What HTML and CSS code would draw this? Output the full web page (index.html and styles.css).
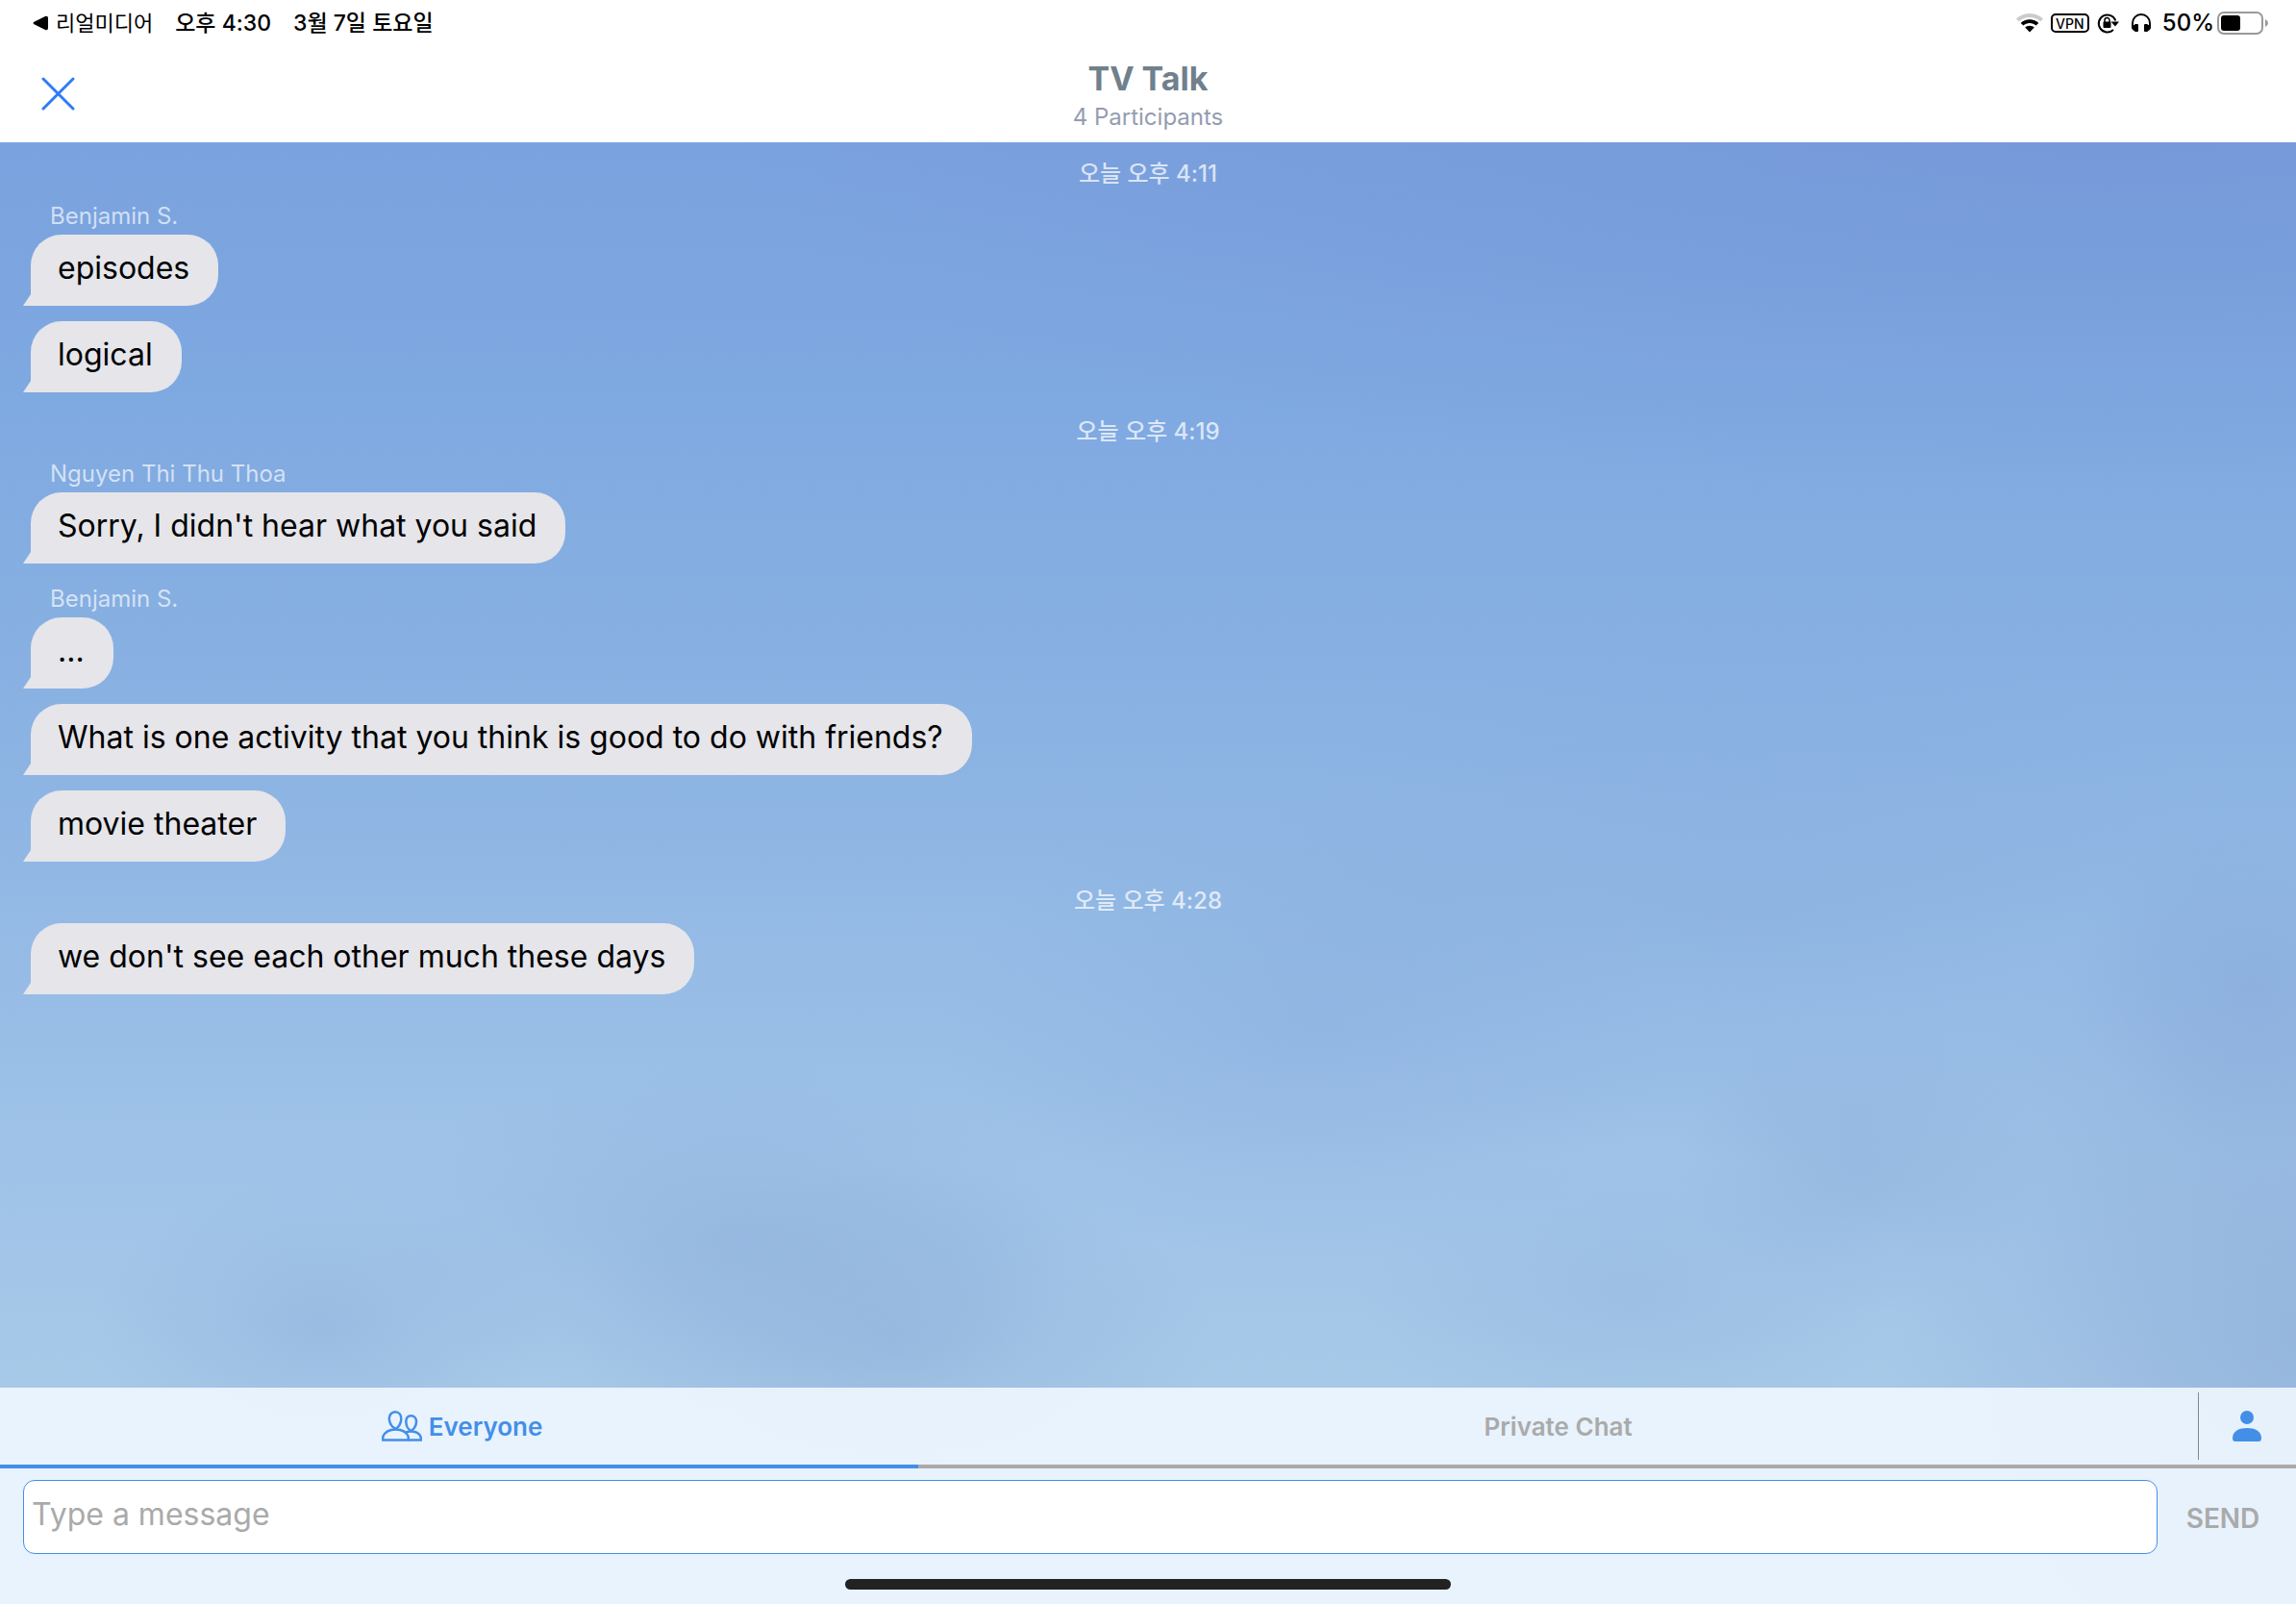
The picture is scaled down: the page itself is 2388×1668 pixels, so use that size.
FILE: index.html
```html
<!DOCTYPE html>
<html lang="ko">
<head>
<meta charset="utf-8">
<meta name="viewport" content="width=device-width, initial-scale=1">
<title>TV Talk</title>
<link rel="stylesheet" href="styles.css">
</head>
<body>
<div class="app">
  <div class="status">
    <a class="status-back" href="#">
      <svg width="16" height="16" viewBox="0 0 16 16" aria-hidden="true"><path d="M1 7 Q0 8 1 9 L13 15 Q16 16 16 13 V3 Q16 0 13 1 Z"/></svg>
      <span>리얼미디어</span>
    </a>
    <span class="status-time">오후 4:30</span>
    <span class="status-date">3월 7일 토요일</span>
    <div class="status-icons">
      <svg width="28" height="20" viewBox="0 0 28 20" aria-hidden="true">
        <path d="M14 0C8.500 0 3.600 2.100 0 5.600L2.700 8.300C5.700 5.500 9.600 3.900 14 3.900S22.300 5.500 25.300 8.300L28 5.600C24.400 2.100 19.500 0 14 0Z" fill="#cbcbcb"/>
        <path d="M14 6.200C10.400 6.200 7.200 7.500 4.700 9.900L7.400 12.600C9.200 11 11.500 10 14 10S18.800 11 20.600 12.600L23.300 9.900C20.800 7.500 17.600 6.200 14 6.200Z"/>
        <path d="M14 12.700C12.100 12.700 10.400 13.400 9.200 14.600L14 19.600L18.800 14.600C17.600 13.400 15.900 12.700 14 12.700Z"/>
      </svg>
      <span class="vpn">VPN</span>
      <svg width="24" height="22" viewBox="0 0 24 22" fill="none" stroke="#000" stroke-width="2" aria-hidden="true">
        <path d="M17 18A9 9 0 1 1 19.300 8.500"/>
        <path d="M14.500 9.500H23L19 14.500Z" fill="#000" stroke="none"/>
        <rect x="6.500" y="9.500" width="8" height="6.500" rx="1" fill="#000" stroke="none"/>
        <path d="M8 10V8a2.500 2.500 0 0 1 5 0v2" stroke-width="1.500"/>
      </svg>
      <svg class="phones" width="20" height="20" viewBox="0 0 20 20" aria-hidden="true">
        <path d="M1 15V10a9 9 0 0 1 18 0V15" fill="none" stroke="#000" stroke-width="2"/>
        <rect x="3" y="11" width="4" height="8" rx="1"/><rect x="13" y="11" width="4" height="8" rx="1"/>
        <path d="M0 12h3v6q-3-1-3-4zM20 12h-3v6q3-1 3-4z"/>
      </svg>
      <span class="percent">50%</span>
      <svg width="54" height="24" viewBox="0 0 54 24" aria-hidden="true">
        <rect x="1" y="1" width="46" height="22" rx="6" fill="none" stroke="#999" stroke-width="2"/>
        <rect x="4" y="4" width="20" height="16" rx="3"/>
        <path d="M50 8q3 1.500 3 4t-3 4z" fill="#999"/>
      </svg>
    </div>
  </div>

  <header class="header">
    <button class="close" type="button" aria-label="Close">
      <svg width="36" height="36" viewBox="0 0 36 36" aria-hidden="true"><path d="M3 2L34 33M34 2L3 33" stroke="#2f7bf6" stroke-width="3" stroke-linecap="round"/></svg>
    </button>
    <div class="heading">
      <h1 class="title">TV Talk</h1>
      <p class="subtitle">4 Participants</p>
    </div>
  </header>

  <div class="room">
    <main class="messages">
      <time class="stamp">오늘 오후 4:11</time>
      <div class="sender">Benjamin S.</div>
      <p class="bubble">episodes</p>
      <p class="bubble">logical</p>
      <time class="stamp">오늘 오후 4:19</time>
      <div class="sender">Nguyen Thi Thu Thoa</div>
      <p class="bubble">Sorry, I didn't hear what you said</p>
      <div class="sender">Benjamin S.</div>
      <p class="bubble">...</p>
      <p class="bubble">What is one activity that you think is good to do with friends?</p>
      <p class="bubble">movie theater</p>
      <time class="stamp">오늘 오후 4:28</time>
      <p class="bubble">we don't see each other much these days</p>
    </main>

    <footer class="footer">
      <div class="tabs">
        <button class="tab tab-active" type="button">
          <svg width="42" height="32" viewBox="0 0 42 32" fill="none" stroke="#438fe8" stroke-width="2.500" aria-hidden="true">
            <path d="M14 1.300C18 1.300 20.300 4.500 20.300 8.500C20.300 13 17.500 17.500 14.500 18.800C11 17.500 7.800 13 7.800 8.500C7.800 4.500 10 1.300 14 1.300Z"/>
            <path d="M1.300 30.500V27C3.500 21.500 9 19.500 14.500 19.500S25.500 21.500 27.700 27V30.500Z"/>
            <path d="M30.500 5.200C34 5.200 36 7.800 36 11.500C36 15.500 33.500 19.500 30.500 20.800C27.500 19.500 25.300 15.500 25.300 11.500C25.300 7.800 27.200 5.200 30.500 5.200Z"/>
            <path d="M25 22.500C31 20 39 22 40.700 27.500V30.500H28"/>
          </svg>
          <span>Everyone</span>
        </button>
        <button class="tab tab-private" type="button">Private Chat</button>
        <button class="people" type="button" aria-label="Participants">
          <svg width="30" height="32" viewBox="0 0 30 32" fill="#438fe8" aria-hidden="true"><circle cx="15" cy="7" r="7"/><path d="M0 28.500C0 21 7 18 15 18S30 21 30 28.500Q30 32 27 32H3Q0 32 0 28.500Z"/></svg>
        </button>
      </div>
      <form class="composer">
        <input class="entry" type="text" placeholder="Type a message" aria-label="Type a message">
        <button class="send" type="button">SEND</button>
      </form>
      <div class="home"></div>
    </footer>
  </div>
</div>
</body>
</html>
```
FILE: styles.css
```css
* { box-sizing: border-box; }

body {
  margin: 0;
  font-family: Inter, "Noto Sans CJK KR", sans-serif;
  color: #000;
  background: #fff;
}

h1, p { margin: 0; }

button {
  padding: 0;
  border: 0;
  background: none;
  font-family: inherit;
}

svg { display: block; flex: none; }

.app {
  display: flex;
  flex-direction: column;
  min-height: 100vh;
}

.status {
  display: flex;
  align-items: center;
  height: 48px;
  padding: 0 28px 0 34px;
  font-size: 23px;
  line-height: 48px;
  font-weight: 500;
}

.status-back {
  display: flex;
  align-items: center;
  gap: 8px;
  color: #000;
  font-size: 22px;
  font-weight: 400;
  text-decoration: none;
}

.status-time,
.status-date { margin-left: 23px; }

.status-icons {
  display: flex;
  align-items: center;
  gap: 8px;
  margin-left: auto;
}

.vpn {
  width: 40px;
  height: 20px;
  border: 2px solid #000;
  border-radius: 5px;
  font-size: 14px;
  line-height: 17px;
  text-align: center;
}

.phones { margin: 0 4px; }

.percent {
  margin-right: -5px;
  font-size: 24px;
}

.header {
  display: grid;
  grid-template-columns: 1fr auto 1fr;
  align-items: center;
  height: 100px;
  padding: 0 42px;
}

.close { justify-self: start; }

.heading {
  padding-top: 3px;
  text-align: center;
}

.title {
  color: #70808c;
  font-size: 34px;
  line-height: 44px;
  font-weight: 700;
}

.subtitle {
  color: #949cb0;
  font-size: 24px;
  line-height: 36px;
}

.room {
  display: flex;
  flex: 1;
  flex-direction: column;
  background:
    radial-gradient(ellipse 60% 24% at 92% 0%, rgba(112, 140, 208, 0.4), transparent),
    radial-gradient(ellipse 8% 12% at 98% 58%, rgba(120, 150, 208, 0.25), transparent),
    radial-gradient(ellipse 16% 16% at 57% 61%, rgba(125, 160, 215, 0.25), transparent),
    radial-gradient(ellipse 22% 18% at 76% 52%, rgba(125, 160, 215, 0.2), transparent),
    radial-gradient(ellipse 8% 10% at 81% 70%, rgba(125, 155, 205, 0.25), transparent),
    radial-gradient(ellipse 16% 12% at 32% 75%, rgba(125, 158, 208, 0.28), transparent),
    radial-gradient(ellipse 14% 12% at 39% 82%, rgba(125, 158, 205, 0.3), transparent),
    radial-gradient(ellipse 10% 10% at 14% 81%, rgba(125, 158, 208, 0.28), transparent),
    radial-gradient(ellipse 12% 10% at 71% 79%, rgba(125, 158, 208, 0.2), transparent),
    radial-gradient(ellipse 18% 32% at 100% 82%, rgba(125, 155, 205, 0.4), transparent),
    linear-gradient(#7aa2de, #7fa9e1 18%, #8ab2e2 40%, #94bae5 54%, #9fc3e8 70%, #a7c9e8 85%);
}

.messages {
  display: flex;
  flex: 1;
  flex-direction: column;
  align-items: flex-start;
  padding: 8px 32px 16px;
}

.stamp {
  align-self: center;
  height: 48px;
  color: rgba(255, 255, 255, 0.72);
  font-size: 24px;
  line-height: 50px;
  font-weight: 500;
}

.bubble + .stamp,
.bubble + .sender,
.bubble + .bubble { margin-top: 16px; }

.sender {
  height: 40px;
  padding-left: 20px;
  color: rgba(255, 255, 255, 0.66);
  font-size: 24px;
  line-height: 42px;
}

.bubble {
  position: relative;
  min-height: 74px;
  padding: 13px 30px 17px 28px;
  border-radius: 32px 32px 32px 0;
  background: #e5e5ea;
  font-size: 32px;
  line-height: 44px;
}

.bubble::before {
  content: "";
  position: absolute;
  left: -8px;
  bottom: 0;
  width: 8px;
  height: 12px;
  background: #e5e5ea;
  clip-path: polygon(100% 0, 100% 100%, 0 100%);
}

.footer { background: rgba(239, 247, 255, 0.9); }

.tabs {
  display: grid;
  grid-template-columns: 40% 1fr 102px;
  height: 84px;
}

.tab {
  display: flex;
  align-items: center;
  justify-content: center;
  gap: 7px;
  border-bottom: 4px solid #aaa;
  color: #aaa;
  font-size: 26px;
  font-weight: 600;
}

.tab-active {
  padding-left: 6px;
  border-color: #438fe8;
  color: #438fe8;
}

.people {
  display: grid;
  place-items: center;
  border-bottom: 4px solid #aaa;
  background: linear-gradient(#888, #888) left center / 1px 70px no-repeat;
}

.composer {
  display: flex;
  align-items: center;
  padding: 12px 24px 0;
}

.entry {
  flex: 1;
  min-width: 0;
  height: 77px;
  padding: 0 8px 6px;
  border: 1px solid #438fe8;
  border-radius: 12px;
  background: #fff;
  font-family: inherit;
  font-size: 32px;
}

.entry::placeholder { color: #aaa; }

.send {
  width: 120px;
  height: 77px;
  margin-left: 8px;
  margin-right: -8px;
  padding-top: 2px;
  color: #aaa;
  font-size: 28px;
  font-weight: 600;
}

.home {
  width: 630px;
  height: 11px;
  margin: 26px auto 15px;
  border-radius: 6px;
  background: #222;
}
```
